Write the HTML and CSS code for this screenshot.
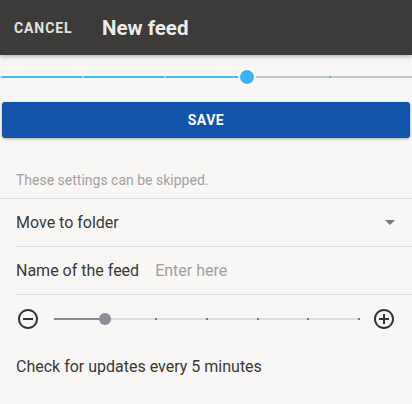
FILE: index.html
```html
<!DOCTYPE html>
<html lang="en">
<head>
<meta charset="utf-8">
<title>New feed</title>
<link rel="stylesheet" href="styles.css">
</head>
<body>
<header class="appbar">
  <span class="cancel">CANCEL</span>
  <h1 class="title">New feed</h1>
</header>
<div class="stepper">
  <div class="step-track">
    <span class="tick tick-done" style="left:0px"></span>
    <span class="tick tick-done" style="left:82px"></span>
    <span class="tick tick-done" style="left:164px"></span>
    <span class="tick tick-todo" style="left:329px"></span>
    <span class="step-thumb" style="left:247px"></span>
  </div>
</div>
<div class="actions">
  <button class="save">SAVE</button>
</div>
<p class="hint">These settings can be skipped.</p>
<div class="list">
  <div class="row">
    <span class="label">Move to folder</span>
    <span class="caret"></span>
  </div>
  <div class="row">
    <span class="label">Name of the feed</span>
    <span class="placeholder">Enter here</span>
  </div>
  <div class="slider-row">
    <svg class="icon" viewBox="0 0 24 24" width="24" height="24"><path d="M7 11v2h10v-2H7zm5-9C6.48 2 2 6.480 2 12s4.48 10 10 10 10-4.48 10-10S17.52 2 12 2zm0 18c-4.41 0-8-3.590-8-8s3.59-8 8-8 8 3.59 8 8-3.59 8-8 8z"/></svg>
    <div class="slider">
      <div class="slider-fill" style="width:51px"></div>
      <span class="dot" style="left:101px"></span>
      <span class="dot" style="left:152px"></span>
      <span class="dot" style="left:203px"></span>
      <span class="dot" style="left:253px"></span>
      <span class="dot" style="left:304px"></span>
      <span class="slider-thumb" style="left:51px"></span>
    </div>
    <svg class="icon" viewBox="0 0 24 24" width="24" height="24"><path d="M13 7h-2v4H7v2h4v4h2v-4h4v-2h-4V7zm-1-5C6.48 2 2 6.48 2 12s4.48 10 10 10 10-4.48 10-10S17.52 2 12 2zm0 18c-4.41 0-8-3.59-8-8s3.59-8 8-8 8 3.59 8 8-3.59 8-8 8z"/></svg>
  </div>
  <p class="interval">Check for updates every 5 minutes</p>
</div>
</body>
</html>
```
FILE: styles.css
```css
* { box-sizing: border-box; }
html, body {
  margin: 0;
  padding: 0;
  background: #f8f7f5;
  font-family: Roboto, "Noto Sans", sans-serif;
  color: #333;
}
.appbar {
  height: 55px;
  background: #3c3b39;
  display: flex;
  align-items: center;
  padding-left: 14px;
  box-shadow: 0 2px 4px rgba(0,0,0,0.25);
  position: relative;
  z-index: 1;
}
.cancel {
  color: #e2e2e2;
  font-size: 14px;
  font-weight: 700;
  letter-spacing: 0.9px;
  width: 88px;
}
.title {
  margin: 0;
  color: #ececec;
  font-size: 20.5px;
  font-weight: 700;
}
.stepper {
  height: 47px;
  padding-top: 21px;
}
.step-track {
  position: relative;
  height: 2px;
  background: linear-gradient(to right, #40b9f5 0, #40b9f5 247px, #c8c8c8 247px, #c8c8c8 100%);
}
.tick {
  position: absolute;
  top: 0;
  width: 2px;
  height: 2px;
}
.tick-done { background: #c8c8c8; }
.tick-todo { background: #40b9f5; }
.step-thumb {
  position: absolute;
  top: 1px;
  width: 18px;
  height: 18px;
  margin: -9px 0 0 -9px;
  border-radius: 50%;
  background: #3cb2f2;
  border: 2.5px solid #fff;
}
.actions {
  padding: 0 2px;
}
.save {
  display: block;
  width: 100%;
  height: 36px;
  border: none;
  border-radius: 3px;
  background: #1254ab;
  color: #fff;
  font-family: Roboto, sans-serif;
  font-size: 14px;
  font-weight: 700;
  letter-spacing: 0.5px;
  box-shadow: 0 1px 3px rgba(0,0,0,0.3);
}
.hint {
  margin: 0;
  padding: 32px 16px 8px;
  line-height: 20px;
  font-size: 14px;
  color: #a2a2a2;
}
.list {
  border-top: 1px solid #dcdcdc;
}
.row {
  margin-left: 16px;
  padding-right: 17px;
  height: 48px;
  border-bottom: 1px solid #dcdcdc;
  display: flex;
  align-items: center;
  font-size: 16px;
}
.label { color: #383838; }
.placeholder {
  color: #a0a0a0;
  margin-left: 16px;
}
.caret {
  margin-left: auto;
  width: 0;
  height: 0;
  border-left: 5px solid transparent;
  border-right: 5px solid transparent;
  border-top: 5px solid #777;
}
.slider-row {
  height: 48px;
  display: flex;
  align-items: center;
  padding: 0 16px;
}
.icon { fill: #333; flex: none; }
.slider {
  position: relative;
  flex: 1;
  height: 2px;
  margin: 0 12px 0 14px;
  background: #dcdcdc;
}
.slider-fill {
  height: 2px;
  background: #8a8a94;
}
.dot {
  position: absolute;
  top: 0;
  width: 2px;
  height: 2px;
  background: #777;
}
.slider-thumb {
  position: absolute;
  top: 1px;
  width: 12px;
  height: 12px;
  margin: -6px 0 0 -6px;
  border-radius: 50%;
  background: #8e8d96;
}
.interval {
  margin: 0;
  padding: 0 16px;
  height: 48px;
  line-height: 48px;
  font-size: 16px;
  color: #383838;
}
```
